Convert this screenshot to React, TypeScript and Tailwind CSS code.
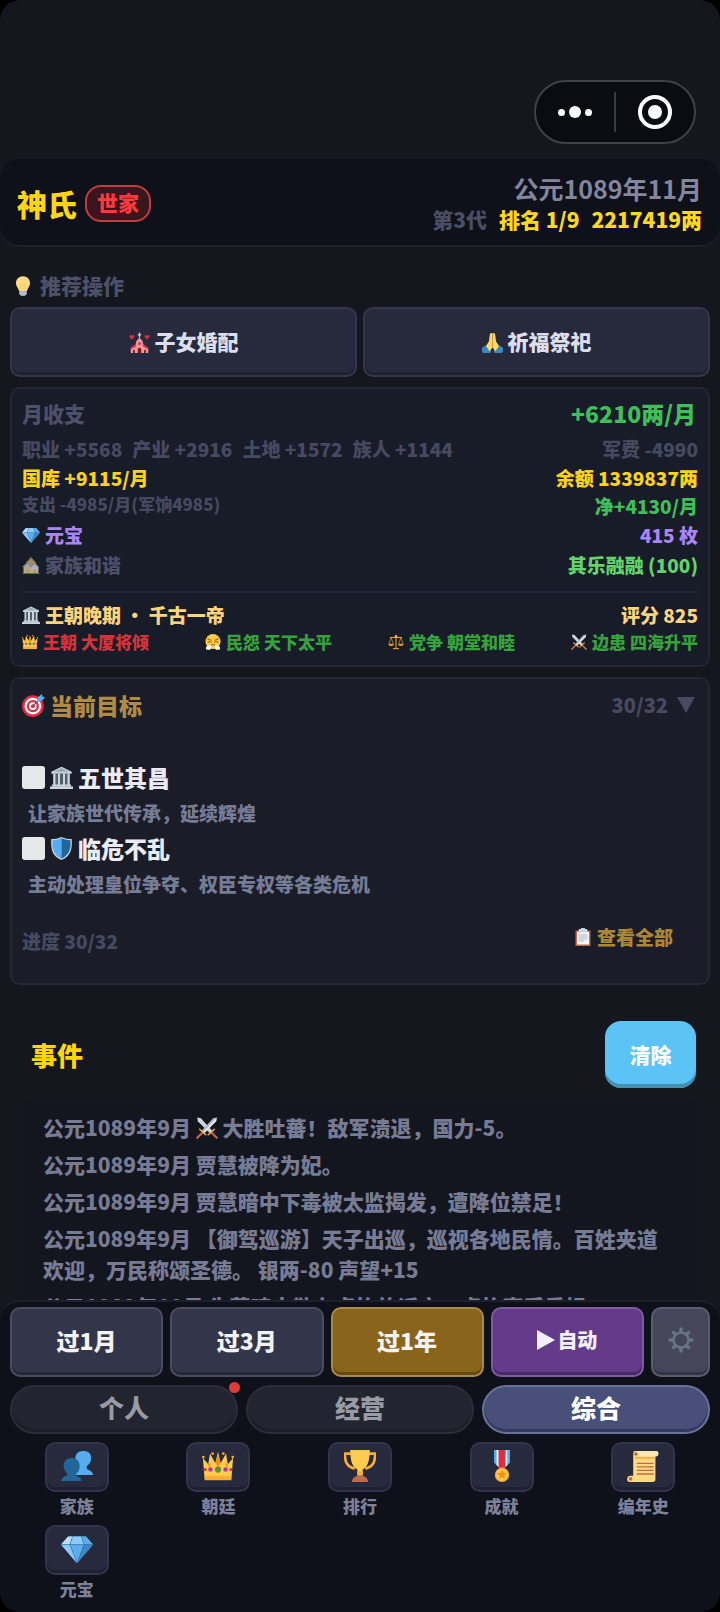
import React from "react";

const emojiPaths = {
  bulb: (
    <>
      <path d="M18 2C11 2 6.500 7 6.500 13.500c0 5 3.500 7.500 5 12.500h13c1.500-5 5-7.500 5-12.500C29.500 7 25 2 18 2z" fill="#FFD983" />
      <path d="M15 26l-2-11 2.500 2 2.500-2 2.500 2 2.500-2-2 11" fill="none" stroke="#FFCC4D" strokeWidth="1.500" />
      <path d="M12 26h12v5l-3 3.500h-6L12 31z" fill="#99AAB5" />
      <path d="M12 28h12M12 31h12" stroke="#CCD6DD" strokeWidth="1.500" />
    </>
  ),
  wedding: (
    <>
      <path d="M17 1h2v3h2v2h-2v4h-2V6h-2V4h2z" fill="#CCD6DD" />
      <path d="M18 9l5 8v5h-10v-5z" fill="#DD2E44" />
      <path d="M13 15l5-5 5 5 2 7 8 5v9H3v-9l8-5z" fill="#F4969F" />
      <path d="M3 27l8-6 2 3-10 6zM33 27l-8-6-2 3 10 6z" fill="#DD2E44" />
      <path d="M15 36v-6a3 3 0 016 0v6zM7 36v-5h3v5zM26 36v-5h3v5z" fill="#662113" />
      <circle cx="18" cy="20" r="2.500" fill="#DD2E44" />
      <path d="M5 13L1 9V6l2-1 2 1.500L7 5l2 1v3zM31 13l-4-4V6l2-1 2 1.500L33 5l2 1v3z" fill="#DD2E44" />
    </>
  ),
  pray: (
    <>
      <path d="M0 27l8-5 8 10-2 4H2l-2-2zM36 27l-8-5-8 10 2 4h12l2-2z" fill="#3B88C3" />
      <path d="M17.500 2c-3-1.500-4 1-4.300 4L12 16l-5 8 6 9 4.500-6zM18.500 2c3-1.500 4 1 4.300 4L24 16l5 8-6 9-4.500-6z" fill="#FFDC5D" />
      <path d="M18 4v23" stroke="#EF9645" strokeWidth="1.500" />
    </>
  ),
  gem: (
    <>
      <path d="M8 4h20l8 9-18 21L0 13z" fill="#5DADEC" />
      <path d="M8 4l-8 9h10l3-9z" fill="#BDDDF4" />
      <path d="M13 4l-3 9h16l-3-9z" fill="#8CCAF7" />
      <path d="M28 4l8 9H26l-3-9z" fill="#5DADEC" />
      <path d="M0 13h10l8 21z" fill="#8CCAF7" />
      <path d="M36 13H26l-8 21z" fill="#3B88C3" />
      <path d="M0 13h36M13 4l-3 9 8 21 8-21-3-9" fill="none" stroke="#2A6797" strokeWidth=".7" />
    </>
  ),
  houses: (
    <>
      <path d="M8 14L18 3l10 11v20H8z" fill="#C1A88B" />
      <path d="M18 2l10 11-2 2-8-9-8 9-2-2z" fill="#9C8A70" />
      <path d="M3 22l8-8 8 8v12H3z" fill="#D9CBB0" />
      <path d="M18 22l7-8 8 8v12H18z" fill="#CCD6DD" />
      <path d="M11 12l9 9-2 2-7-7-8 7-2-2zM25 13l9 9-2 1-7-7-6 6-1-2z" fill="#A9A493" />
      <path d="M9 27h4v7H9zM23 27h5v7h-5z" fill="#FFAC33" />
      <path d="M1 34h34v2H1z" fill="#5C913B" />
    </>
  ),
  temple: (
    <>
      <path d="M18 1L2 9v3h32V9z" fill="#CCD6DD" />
      <path d="M18 3L6 9h24z" fill="#99AAB5" />
      <path d="M5 12h4v18H5zM12 12h4v18h-4zM20 12h4v18h-4zM27 12h4v18h-4z" fill="#CCD6DD" />
      <path d="M9 12h3v18H9zM16 12h4v18h-4zM24 12h3v18h-3z" fill="#55606A" />
      <path d="M3 29h30v3h3v4H0v-4h3z" fill="#CCD6DD" />
      <path d="M3 32h30" stroke="#99AAB5" />
    </>
  ),
  crown: (
    <>
      <path d="M3 33L1 9l6 7 2-12 6 11L18 2l3 13 6-11 2 12 6-7-2 24z" fill="#FFCC4D" />
      <path d="M7 16l1 5 2-6zM15 14l3 6 3-6-3-8zM29 16l-1 5-2-6z" fill="#F4900C" />
      <path d="M3 29h30v5H3z" fill="#FFAC33" />
      <circle cx="18" cy="22" r="3.500" fill="#5C913B" />
      <circle cx="9.500" cy="22" r="2.500" fill="#AA3CA8" />
      <circle cx="26.500" cy="22" r="2.500" fill="#AA3CA8" />
      <circle cx="3.500" cy="22" r="1.800" fill="#DD2E44" />
      <circle cx="32.500" cy="22" r="1.800" fill="#DD2E44" />
      <circle cx="1.500" cy="8" r="1.500" fill="#FFAC33" />
      <circle cx="12" cy="4" r="1.500" fill="#FFAC33" />
      <circle cx="24" cy="4" r="1.500" fill="#FFAC33" />
      <circle cx="34.500" cy="8" r="1.500" fill="#FFAC33" />
    </>
  ),
  huff: (
    <>
      <circle cx="18" cy="17" r="17" fill="#FFCC4D" />
      <path d="M6 11l8 3M30 11l-8 3M7 19c2-3 5-3 7 0M22 19c2-3 5-3 7 0M13 26c3-3 7-3 10 0" fill="none" stroke="#B5670A" strokeWidth="2.500" strokeLinecap="round" />
      <path d="M13 25c-5 0-11 2-11 7 0 3 3 4 5 3 3 2 6 0 6-3 2-2 1-5 0-7zM23 25c5 0 11 2 11 7 0 3-3 4-5 3-3 2-6 0-6-3-2-2-1-5 0-7z" fill="#F5F8FA" />
    </>
  ),
  scales: (
    <>
      <path d="M18 3v29M5 8h26M12 33h12" stroke="#FFAC33" strokeWidth="2.200" strokeLinecap="round" />
      <circle cx="18" cy="5" r="3" fill="#FFAC33" />
      <path d="M7 8L2 23h10zM29 8l-5 15h10z" fill="none" stroke="#FFAC33" strokeWidth="1.400" />
      <path d="M1 23h12c0 5-12 5-12 0zM23 23h12c0 5-12 5-12 0z" fill="#FFAC33" />
    </>
  ),
  swords: (
    <>
      <path d="M2 1l6 1 19 21-4 4L3 7z" fill="#CCD6DD" />
      <path d="M34 1l-6 1L9 23l4 4L33 7z" fill="#AAB8C2" />
      <path d="M34 1L11 25l2 2L33 7z" fill="#E1E8ED" />
      <path d="M26 26l8 8M10 26l-8 8" stroke="#BF6952" strokeWidth="3.500" strokeLinecap="round" />
      <path d="M20 29l10-9M16 29L6 20" stroke="#FFAC33" strokeWidth="2.500" strokeLinecap="round" />
    </>
  ),
  target: (
    <>
      <circle cx="17" cy="19" r="17" fill="#DD2E44" />
      <circle cx="17" cy="19" r="13" fill="#fff" />
      <circle cx="17" cy="19" r="9.500" fill="#DD2E44" />
      <circle cx="17" cy="19" r="6" fill="#fff" />
      <circle cx="17" cy="19" r="3" fill="#DD2E44" />
      <path d="M17 19L31 5" stroke="#226699" strokeWidth="2" />
      <path d="M24 12l1-7 6-5 1 4 4 1-5 6z" fill="#55ACEE" />
    </>
  ),
  shield: (
    <>
      <path d="M18 0c6 3 10 3 16 3 1 15-1 27-16 33C3 30 1 18 2 3c6 0 10 0 16-3z" fill="#CCD6DD" />
      <path d="M18 2v32C5 28 3 17 4 5c5 0 9-1 14-3z" fill="#55ACEE" />
      <path d="M18 2v32c13-6 15-17 14-29-5 0-9-1-14-3z" fill="#226699" />
    </>
  ),
  clipboard: (
    <>
      <path d="M3 5h30v31H3z" fill="#C1694F" />
      <path d="M6 8h24v25H6z" fill="#F5F8FA" />
      <path d="M10 2h4a4 4 0 018 0h4l2 7H8z" fill="#CCD6DD" />
      <path d="M9 14h18M9 18h18M9 22h18M9 26h12" stroke="#AAB8C2" strokeWidth="2" />
    </>
  ),
  people: (
    <>
      <path d="M25 1c-6 0-9 4-9 9 0 4 2 7 4 9v3c-3 2-5 3-5 6h21c0-4-4-5-7-7v-3c3-2 5-5 5-9 0-5-3-8-9-8z" fill="#55ACEE" />
      <path d="M12 9c-6 0-9 4-9 9 0 4 2 6 4 9v2c-4 1-7 3-7 6h23c0-4-4-5-6-6v-2c3-3 4-5 4-9 0-5-3-9-9-9z" fill="#226699" />
    </>
  ),
  trophy: (
    <>
      <path d="M8 4H1c0 9 2 15 11 17M28 4h7c0 9-2 15-11 17" fill="none" stroke="#FFAC33" strokeWidth="3" />
      <path d="M7 0h22c0 11-2 19-8 22v6h-6v-6C9 19 7 11 7 0z" fill="#FFCC4D" />
      <path d="M15 24h6v5h-6z" fill="#FFAC33" />
      <path d="M9 36c0-5 4-7 9-7s9 2 9 7z" fill="#C1694F" />
    </>
  ),
  medal: (
    <>
      <path d="M9 0h18v14l-6 6h-6l-6-6z" fill="#55ACEE" />
      <path d="M12 0h12v17l-3 3h-6l-3-3z" fill="#fff" />
      <path d="M14 0h8v20h-8z" fill="#DD2E44" />
      <circle cx="18" cy="28" r="8" fill="#FFAC33" />
      <circle cx="18" cy="28" r="6.500" fill="#FFCC4D" />
      <path d="M18 22l1.600 3.800 4 .2-3 2.600 1 4-3.600-2.200-3.600 2.200 1-4-3-2.600 4-.2z" fill="#F4900C" />
    </>
  ),
  scroll: (
    <>
      <path d="M9 1h24c3 0 3 6 0 6h-1v26c0 2-1 3-3 3H3c-4 0-4-7 1-7h3V5c0-2 0-4 2-4z" fill="#FFD983" />
      <path d="M9 1h24c3 0 3 6 0 6H13c1-3-1-6-4-6z" fill="#FFE8B6" />
      <circle cx="10" cy="4.500" r="2" fill="#C1694F" />
      <circle cx="4" cy="32.500" r="2" fill="#C1694F" />
      <path d="M9 9h23" stroke="#E39F3D" strokeWidth="1.300" />
      <path d="M11 15h19M11 19h19M11 23h19M11 27h19" stroke="#C1694F" strokeWidth="1.500" />
    </>
  ),
};

type EmojiName = keyof typeof emojiPaths;

const Emoji: React.FC<{ name: EmojiName; className?: string }> = ({ name, className = "size-5" }) => (
  <svg viewBox="0 0 36 36" aria-hidden="true" className={`shrink-0 ${className}`}>
    {emojiPaths[name]}
  </svg>
);

const recommended: { icon: EmojiName; label: string }[] = [
  { icon: "wedding", label: "子女婚配" },
  { icon: "pray", label: "祈福祭祀" },
];

const realmStats: { icon: EmojiName; label: string; color: string }[] = [
  { icon: "crown", label: "王朝 大厦将倾", color: "text-[#d2343c]" },
  { icon: "huff", label: "民怨 天下太平", color: "text-[#37a13d]" },
  { icon: "scales", label: "党争 朝堂和睦", color: "text-[#37a13d]" },
  { icon: "swords", label: "边患 四海升平", color: "text-[#37a13d]" },
];

const goals: { icon: EmojiName; title: string; desc: string }[] = [
  { icon: "temple", title: "五世其昌", desc: "让家族世代传承，延续辉煌" },
  { icon: "shield", title: "临危不乱", desc: "主动处理皇位争夺、权臣专权等各类危机" },
];

const events: { date: string; icon?: EmojiName; text: string }[] = [
  { date: "公元1089年9月", icon: "swords", text: "大胜吐蕃！敌军溃退，国力-5。" },
  { date: "公元1089年9月", text: "贾慧被降为妃。" },
  { date: "公元1089年9月", text: "贾慧暗中下毒被太监揭发，遭降位禁足！" },
  {
    date: "公元1089年9月",
    text: "【御驾巡游】天子出巡，巡视各地民情。百姓夹道欢迎，万民称颂圣德。 银两-80 声望+15",
  },
  { date: "公元1089年10月", text: "朱蓓暗中散布卓怡的谣言，卓怡声受重损。" },
];

const skipButtons = [
  { label: "过1月", style: "bg-[#33364a] border-[#4a4d60] shadow-[inset_0_-3px_0_#26293a]" },
  { label: "过3月", style: "bg-[#33364a] border-[#4a4d60] shadow-[inset_0_-3px_0_#26293a]" },
  { label: "过1年", style: "bg-[#8b641c] border-[#a88a4c] shadow-[inset_0_-3px_0_#664812]" },
];

const tabs = [
  { id: "personal", label: "个人", dot: true },
  { id: "business", label: "经营", dot: false },
  { id: "general", label: "综合", dot: false },
];

const menu: { icon: EmojiName; label: string }[] = [
  { icon: "people", label: "家族" },
  { icon: "crown", label: "朝廷" },
  { icon: "trophy", label: "排行" },
  { icon: "medal", label: "成就" },
  { icon: "scroll", label: "编年史" },
  { icon: "gem", label: "元宝" },
];

const Capsule: React.FC = () => (
  <div className="mr-6 flex h-16 w-[162px] items-center self-end rounded-full border-2 border-[#3f4144] bg-[#0b0c11]">
    <button type="button" aria-label="更多" className="flex w-[78px] items-center justify-center gap-1">
      <span className="size-[7px] rounded-full bg-white" />
      <span className="size-3 rounded-full bg-white" />
      <span className="size-[7px] rounded-full bg-white" />
    </button>
    <span className="h-10 w-0.5 bg-[#3a3c40]" />
    <button type="button" aria-label="关闭" className="flex flex-1 items-center justify-center">
      <span className="flex size-[34px] items-center justify-center rounded-full border-4 border-white">
        <span className="size-[14px] rounded-full bg-white" />
      </span>
    </button>
  </div>
);

const Header: React.FC = () => (
  <header className="mt-[15px] flex h-[88px] items-center justify-between rounded-[20px] border-b-2 border-[#1d202b] bg-[#0e101a] px-[17px]">
    <div className="flex items-center gap-2 pt-[2px]">
      <h1 className="text-[30px] leading-9 text-[#ffd60f]">神氏</h1>
      <span className="flex h-[37px] items-center rounded-2xl border-2 border-[#c23a42] bg-[#3b151d] px-[10px] text-[21px] text-[#fb3a3e]">
        世家
      </span>
    </div>
    <div className="flex flex-col items-end pt-[2px] pr-px">
      <span className="text-[25px] leading-8 font-bold text-[#83869c]">公元1089年11月</span>
      <div className="flex gap-3 text-[21px] leading-[30px] text-[#ffd919]">
        <span className="text-[#4a4e63]">第3代</span>
        <span>排名 1/9</span>
        <span>2217419两</span>
      </div>
    </div>
  </header>
);

const Finance: React.FC = () => (
  <section className="mt-[10px] rounded-[10px] border-2 border-[#232634] bg-[#181b28] px-[10px] pb-2 text-[19px] leading-[30px]">
    <div className="flex h-[48px] items-center justify-between pr-[2px]">
      <h2 className="text-[21px] text-[#4c5068]">月收支</h2>
      <span className="text-[23px] text-[#3ebf57]">+6210两/月</span>
    </div>
    <div className="flex h-[24px] items-center justify-between text-[#464a61]">
      <div className="flex gap-[10px]">
        <span>职业 +5568</span>
        <span>产业 +2916</span>
        <span>土地 +1572</span>
        <span>族人 +1144</span>
      </div>
      <span>军费 -4990</span>
    </div>
    <div className="flex h-[33px] items-center justify-between text-[#fbd31a]">
      <span>国库 +9115/月</span>
      <span>余额 1339837两</span>
    </div>
    <div className="flex h-[24px] items-center justify-between text-[#464a61]">
      <span className="pb-[5px] text-[17px]">支出 -4985/月(军饷4985)</span>
      <span className="text-[#3ebf57]">净+4130/月</span>
    </div>
    <div className="mt-[2px] flex h-[30px] items-center justify-between text-[#a985f5]">
      <span className="flex items-center gap-[5px]">
        <Emoji name="gem" className="size-[18px]" />
        元宝
      </span>
      <span>415 枚</span>
    </div>
    <div className="flex h-[30px] items-center justify-between">
      <span className="flex items-center gap-[5px] text-[#4c5068]">
        <Emoji name="houses" className="size-[18px] opacity-80" />
        家族和谐
      </span>
      <span className="text-[#62d46b]">其乐融融 (100)</span>
    </div>
    <div className="mt-[11px] flex h-[36px] items-center justify-between border-t-2 border-[#222534] pt-[10px] text-[#fbd47b]">
      <span className="flex items-center gap-[5px]">
        <Emoji name="temple" className="size-[18px]" />
        王朝晚期 · 千古一帝
      </span>
      <span>评分 825</span>
    </div>
    <ul className="flex h-[30px] items-center justify-between text-[17px]">
      {realmStats.map((stat) => (
        <li key={stat.label} className={`flex items-center gap-[5px] ${stat.color}`}>
          <Emoji name={stat.icon} className="size-4" />
          {stat.label}
        </li>
      ))}
    </ul>
  </section>
);

const Goals: React.FC = () => (
  <section className="mt-[10px] rounded-[10px] border-2 border-[#232634] bg-[#1a1d27] px-[10px] pb-[30px]">
    <div className="flex h-[52px] items-center justify-between">
      <h2 className="flex items-center gap-[5px] text-[23px] text-[#b08b45]">
        <Emoji name="target" className="size-[23px]" />
        当前目标
      </h2>
      <button type="button" className="flex items-center gap-[9px] pr-[3px] text-[20px] text-[#474a60]">
        30/32
        <svg viewBox="0 0 18 16" aria-hidden="true" className="h-4 w-[18px]">
          <path d="M0 0h18L9 16z" fill="currentColor" />
        </svg>
      </button>
    </div>
    <div className="mt-7">
      {goals.map((goal, index) => (
        <div key={goal.title}>
          <div className="flex h-[36px] items-center gap-[5px] text-[23px] text-[#eaebf5]">
            <input
              id={`goal-${index}`}
              type="checkbox"
              className="size-[23px] appearance-none rounded-[3px] bg-[#e6e7e9]"
            />
            <label htmlFor={`goal-${index}`} className="flex items-center gap-[5px]">
              <Emoji name={goal.icon} className="size-[23px]" />
              {goal.title}
            </label>
          </div>
          <p className="pl-[6px] text-[19px] leading-[35px] text-[#777c96]">{goal.desc}</p>
        </div>
      ))}
    </div>
    <div className="mt-5 flex h-[32px] items-center justify-between text-[19px]">
      <span className="pt-2 text-[#454a61]">进度 30/32</span>
      <button type="button" className="flex items-center gap-[5px] pr-[25px] text-[#ab8637]">
        <Emoji name="clipboard" className="size-[18px]" />
        查看全部
      </button>
    </div>
  </section>
);

const EventLog: React.FC = () => (
  <section className="mt-9 flex min-h-0 flex-1 flex-col px-[14px]">
    <div className="flex items-center justify-between pl-[7px]">
      <h2 className="text-[26px] leading-8 text-[#ffd60a]">事件</h2>
      <button
        type="button"
        className="h-[67px] w-[91px] rounded-2xl bg-[#5bc3f5] text-[21px] text-white shadow-[inset_0_-4px_0_#4490b4]"
      >
        清除
      </button>
    </div>
    <ul className="mt-3 flex min-h-0 flex-1 flex-col gap-[6px] overflow-hidden rounded-t-xl bg-[#14161f] px-[19px] pt-3 text-[21px] leading-[31px] text-[#777b94]">
      {events.map((event, index) => (
        <li key={index} className="shrink-0">
          {event.date}{" "}
          {event.icon && (
            <>
              <Emoji name={event.icon} className="inline-block size-[22px] align-[-3px]" />{" "}
            </>
          )}
          {event.text}
        </li>
      ))}
    </ul>
  </section>
);

const BottomBar: React.FC = () => (
  <footer className="rounded-[20px] border-t-2 border-[#1d202b] bg-[#0e101a] pb-[9px] pt-[5px]">
    <div className="flex gap-[7px] px-[10px]">
      {skipButtons.map((button) => (
        <button
          key={button.label}
          type="button"
          className={`h-[70px] flex-1 rounded-[10px] border-2 pb-1 text-[23px] text-[#f3f4f8] ${button.style}`}
        >
          {button.label}
        </button>
      ))}
      <button
        type="button"
        className="flex h-[70px] flex-1 items-center justify-center gap-[2px] rounded-[10px] border-2 border-[#7e5a9f] bg-[#643b8b] pb-1 text-[20px] text-[#f3f0f8] shadow-[inset_0_-3px_0_#482a66]"
      >
        <svg viewBox="0 0 18 20" aria-hidden="true" className="h-5 w-[18px]">
          <path d="M0 0l18 10L0 20z" fill="currentColor" />
        </svg>
        自动
      </button>
      <button
        type="button"
        aria-label="设置"
        className="flex h-[70px] w-[59px] items-center justify-center rounded-[10px] border-2 border-[#5c5d6c] bg-[#454659] pb-1 shadow-[inset_0_-3px_0_#333445]"
      >
        <svg viewBox="0 0 26 26" aria-hidden="true" className="size-[26px] text-[#66757f]" fill="none" stroke="currentColor">
          <circle cx="13" cy="13" r="7.500" strokeWidth="2.500" />
          <path
            d="M13 2v3M13 21v3M2 13h3M21 13h3M5.500 5.500l2 2M18.500 18.500l2 2M5.500 20.500l2-2M18.500 7.500l2-2"
            strokeWidth="3.500"
            strokeLinecap="round"
          />
        </svg>
      </button>
    </div>
    <nav className="mt-2 flex gap-2 px-[10px]">
      {tabs.map((tab) => (
        <button
          key={tab.id}
          type="button"
          className={
            tab.id === "general"
              ? "h-[49px] flex-1 rounded-full border-2 border-[#6a7197] bg-[#48507a] pb-1 text-[25px] text-white shadow-[inset_0_-3px_0_#343b62]"
              : "relative h-[49px] flex-1 rounded-full border-2 border-[#2b2d38] bg-[#22242f] pb-1 text-[25px] text-[#999ba4] shadow-[inset_0_-3px_0_#1b1d27]"
          }
        >
          {tab.label}
          {tab.dot && <span className="absolute -top-[5px] -right-[4px] size-[11px] rounded-full bg-[#e03a3e]" />}
        </button>
      ))}
    </nav>
    <div className="mt-2 grid grid-cols-5 gap-y-[5px] px-[6px]">
      {menu.map((item) => (
        <button key={item.label} type="button" className="flex flex-col items-center text-[17px] text-[#7d8199]">
          <span className="flex h-[50px] w-[64px] items-center justify-center rounded-[10px] border-2 border-[#31344a] bg-[#272a3d] pb-[2px] shadow-[inset_0_-3px_0_#1e2132]">
            <Emoji name={item.icon} className="size-8" />
          </span>
          <span className="leading-7">{item.label}</span>
        </button>
      ))}
    </div>
  </footer>
);

export default function App() {
  return (
    <div className="bg-black font-['Noto_Sans_CJK_SC',sans-serif] font-black">
      <div className="flex h-screen flex-col overflow-hidden rounded-[20px] bg-[#14171e] pt-20">
        <Capsule />
        <Header />
        <main className="flex min-h-0 flex-1 flex-col px-[10px]">
          <h2 className="mt-[23px] flex h-[32px] items-center gap-[6px] px-[2px] text-[21px] text-[#4c5068]">
            <Emoji name="bulb" className="size-[22px]" />
            推荐操作
          </h2>
          <div className="mt-[5px] flex gap-[6px]">
            {recommended.map((action) => (
              <button
                key={action.label}
                type="button"
                className="flex h-[70px] flex-1 items-center justify-center gap-[5px] rounded-[10px] border-2 border-[#343747] bg-[#272a3c] text-[21px] text-[#dcdeee] shadow-[inset_0_-3px_0_#1e2132]"
              >
                <Emoji name={action.icon} className="size-[21px]" />
                {action.label}
              </button>
            ))}
          </div>
          <Finance />
          <Goals />
          <EventLog />
        </main>
        <BottomBar />
      </div>
    </div>
  );
}
